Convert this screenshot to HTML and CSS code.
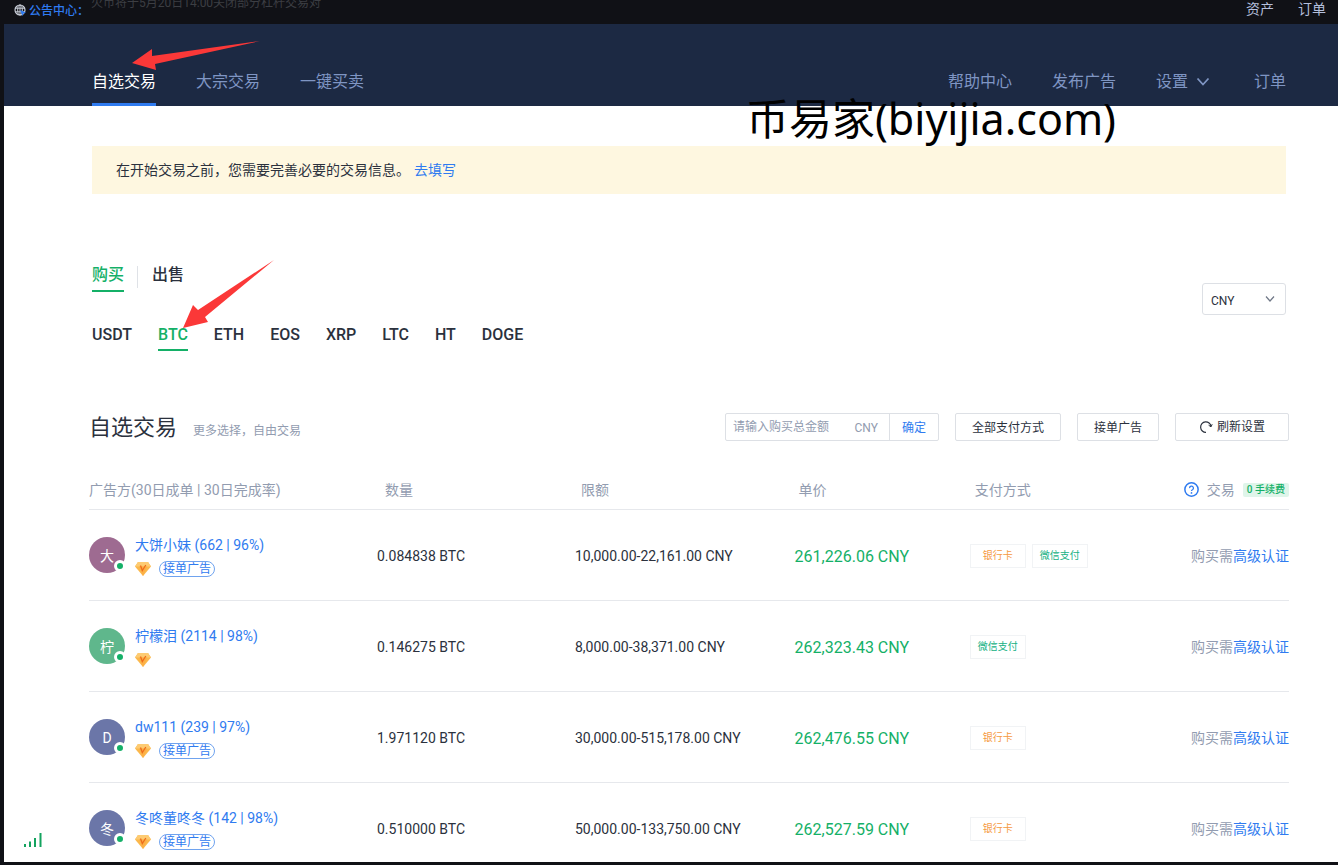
FILE: index.html
```html
<!DOCTYPE html>
<html lang="zh-CN">
<head>
<meta charset="utf-8">
<title>自选交易</title>
<link rel="stylesheet" href="styles.css">
</head>
<body>
<svg class="defs" aria-hidden="true">
  <symbol id="gem" viewBox="0 0 16 14">
    <path d="M3 0h10l3 4.500L8 14 0 4.500z" fill="#fbb84c"/>
    <path d="M3 0h10l3 4.500H0z" fill="#fdcb72"/>
    <path d="M4 4.500h8L8 14z" fill="#fcaf45"/>
    <path d="M5.500 3.500L7.300 8.500 10.800 3" fill="none" stroke="#ee6c1c" stroke-width="1.300"/>
  </symbol>
</svg>
<div class="page">
  <div class="topbar">
    <svg class="globe" viewBox="0 0 12 12"><circle cx="6" cy="6" r="5" fill="none" stroke="#c9ced8" stroke-width="1.200"/><ellipse cx="6" cy="6" rx="2.300" ry="5" fill="none" stroke="#c9ced8"/><path d="M1 4.200h10M1 7.800h10M6 1v10" stroke="#c9ced8" fill="none"/><path d="M6 6l6 2.500-2.500 1L8.500 12z" fill="#2f7bf0"/></svg>
    <span class="topbar-label">公告中心：</span>
    <span class="topbar-news">火币将于5月20日14:00关闭部分杠杆交易对</span>
    <nav class="topbar-links"><a href="#">资产</a><a href="#">订单</a></nav>
  </div>
  <header class="header">
    <nav class="nav">
      <a class="active" href="#">自选交易</a>
      <a href="#">大宗交易</a>
      <a href="#">一键买卖</a>
    </nav>
    <nav class="nav">
      <a href="#">帮助中心</a>
      <a href="#">发布广告</a>
      <a href="#">设置<svg class="caret" viewBox="0 0 14 10"><path d="M1.500 1.500L7 7.500l5.500-6" fill="none" stroke="currentColor" stroke-width="1.800"/></svg></a>
      <a href="#">订单</a>
    </nav>
    <svg class="arrow arrow-nav" viewBox="0 0 128 30"><path d="M0 22L20 8v7L128 0 23 23l1 6z" fill="#fb3838"/></svg>
    <div class="watermark">币易家(biyijia.com)</div>
  </header>

  <section class="intro">
    <p class="notice">在开始交易之前，您需要完善必要的交易信息。<a href="#">去填写</a></p>
    <div class="market">
      <div>
        <div class="sides">
          <button class="side active">购买</button>
          <button class="side">出售</button>
        </div>
        <div class="coins">
          <button class="coin">USDT</button>
          <button class="coin active">BTC<svg class="arrow arrow-coin" viewBox="0 0 92 68"><path d="M0 68L10 45l5 5L91 0 22 57l3 5z" fill="#fb3838"/></svg></button>
          <button class="coin">ETH</button>
          <button class="coin">EOS</button>
          <button class="coin">XRP</button>
          <button class="coin">LTC</button>
          <button class="coin">HT</button>
          <button class="coin">DOGE</button>
        </div>
      </div>
      <div class="currency">
        <select aria-label="法币"><option>CNY</option></select>
        <svg viewBox="0 0 10 8"><path d="M1 1.500l4 4.500 4-4.500" fill="none" stroke="#707887" stroke-width="1.200"/></svg>
      </div>
    </div>
  </section>

  <main class="list">
    <div class="list-head">
      <h1>自选交易</h1>
      <span class="sub">更多选择，自由交易</span>
      <div class="filters">
        <div class="amount">
          <input type="text" aria-label="购买总金额" placeholder="请输入购买总金额">
          <span>CNY</span>
          <button>确定</button>
        </div>
        <button class="filter">全部支付方式</button>
        <button class="filter">接单广告</button>
        <button class="filter refresh"><svg viewBox="0 0 14 14"><path d="M7 12.300A5.200 5.200 0 1 1 12 6.500" fill="none" stroke="#2b313d" stroke-width="1.200"/><path d="M9.600 5.200l2.400 1.600 1.200-2.600" fill="none" stroke="#2b313d"/></svg>刷新设置</button>
      </div>
    </div>
    <table class="ads">
      <thead>
        <tr>
          <th class="c-user">广告方(30日成单 | 30日完成率)</th>
          <th class="c-qty">数量</th>
          <th class="c-limit">限额</th>
          <th class="c-price">单价</th>
          <th class="c-pay">支付方式</th>
          <th class="c-trade"><div class="trade-head"><svg viewBox="0 0 14 14"><circle cx="7" cy="7" r="6.200" fill="none" stroke="#2f7bf0" stroke-width="1.400"/><path d="M5.200 5.700a1.800 1.800 0 1 1 2.700 1.500c-.6.300-.9.600-.9 1.200" fill="none" stroke="#2f7bf0" stroke-width="1.200"/><circle cx="7" cy="10.200" r=".8" fill="#2f7bf0"/></svg><span>交易</span><span class="fee">0 手续费</span></div></th>
        </tr>
      </thead>
      <tbody>
        <tr>
          <td><div class="user"><span class="avatar plum">大</span><div><a href="#">大饼小妹 (662 | 96%)</a><div class="marks"><svg><use href="#gem"/></svg><span class="tag">接单广告</span></div></div></div></td>
          <td>0.084838 BTC</td><td>10,000.00-22,161.00 CNY</td><td class="price">261,226.06 CNY</td>
          <td><div class="pays"><span class="pay bank">银行卡</span><span class="pay wechat">微信支付</span></div></td>
          <td class="trade">购买需<a href="#">高级认证</a></td>
        </tr>
        <tr>
          <td><div class="user"><span class="avatar green">柠</span><div><a href="#">柠檬泪 (2114 | 98%)</a><div class="marks"><svg><use href="#gem"/></svg></div></div></div></td>
          <td>0.146275 BTC</td><td>8,000.00-38,371.00 CNY</td><td class="price">262,323.43 CNY</td>
          <td><div class="pays"><span class="pay wechat">微信支付</span></div></td>
          <td class="trade">购买需<a href="#">高级认证</a></td>
        </tr>
        <tr>
          <td><div class="user"><span class="avatar slate">D</span><div><a href="#">dw111 (239 | 97%)</a><div class="marks"><svg><use href="#gem"/></svg><span class="tag">接单广告</span></div></div></div></td>
          <td>1.971120 BTC</td><td>30,000.00-515,178.00 CNY</td><td class="price">262,476.55 CNY</td>
          <td><div class="pays"><span class="pay bank">银行卡</span></div></td>
          <td class="trade">购买需<a href="#">高级认证</a></td>
        </tr>
        <tr>
          <td><div class="user"><span class="avatar slate">冬</span><div><a href="#">冬咚董咚冬 (142 | 98%)</a><div class="marks"><svg><use href="#gem"/></svg><span class="tag">接单广告</span></div></div></div></td>
          <td>0.510000 BTC</td><td>50,000.00-133,750.00 CNY</td><td class="price">262,527.59 CNY</td>
          <td><div class="pays"><span class="pay bank">银行卡</span></div></td>
          <td class="trade">购买需<a href="#">高级认证</a></td>
        </tr>
      </tbody>
    </table>
  </main>
  <svg class="signal" viewBox="0 0 18 14"><path d="M1 11v3M6 8.500V14M11 5v9M16.500 0v14" stroke="#14a35f" stroke-width="2" fill="none"/></svg>
</div>
</body>
</html>
```

FILE: styles.css
```css
* { box-sizing: border-box; }
body {
  margin: 0;
  font-family: Roboto, "Noto Sans CJK SC", sans-serif;
  font-size: 14px;
  line-height: 20px;
  color: #2b313d;
}
a { color: #2f7bf0; text-decoration: none; }
button, input, select { font: inherit; color: inherit; background: none; border: 0; padding: 0; margin: 0; }
button { cursor: pointer; }
.defs { display: none; }
.page {
  position: relative;
  height: 100vh;
  overflow: hidden;
  background: #fff;
  border-left: 4px solid #101116;
  border-bottom: 3px solid #101116;
}

/* Announcement bar */
.topbar {
  display: flex;
  height: 24px;
  padding: 0 12px 0 10px;
  background: #101116;
  font-size: 12px;
}
.globe { width: 12px; height: 12px; margin: 4px 3px 0 0; flex: none; }
.topbar-label { width: 62px; color: #2f7bf0; font-weight: 500; line-height: 22px; white-space: nowrap; }
.topbar-news { color: #3c3e43; line-height: 6px; white-space: nowrap; }
.topbar-links { display: flex; gap: 24px; margin-left: auto; font-size: 14px; line-height: 18px; }
.topbar-links a { color: #b4bfdc; }

/* Header */
.header {
  position: relative;
  display: flex;
  justify-content: space-between;
  height: 82px;
  padding: 0 52px 0 88px;
  background: #1c2943;
}
.nav { display: flex; gap: 40px; font-size: 16px; }
.nav a {
  display: flex;
  align-items: center;
  color: #7f95c3;
  padding-top: 36px;
  border-bottom: 3px solid transparent;
}
.nav .active { color: #fff; border-color: #2f7bf0; }
.caret { width: 14px; height: 10px; margin: 0 4px 0 8px; }
.arrow { position: absolute; overflow: visible; }
.arrow-nav { left: 128px; top: 17px; width: 128px; height: 30px; }
.watermark {
  position: absolute;
  right: 222px;
  top: 65px;
  font: 43px/60px "Noto Sans", "Noto Sans CJK SC", sans-serif;
  color: #000;
  white-space: nowrap;
}

/* Notice, sides and coins */
.intro { padding: 40px 52px 0 88px; }
.notice { margin: 0; padding: 14px 24px; background: #fef7e0; }
.notice a { margin-left: 4px; }
.market { display: flex; justify-content: space-between; padding-top: 68px; }
.sides { display: flex; font-size: 16px; font-weight: 500; }
.side { height: 30px; padding-bottom: 2px; line-height: 24px; border-bottom: 2px solid transparent; }
.side.active, .coin.active { color: #14b067; border-color: #14b067; }
.side + .side { position: relative; margin-left: 28px; }
.side + .side::before {
  content: "";
  position: absolute;
  left: -15px;
  top: 4px;
  height: 22px;
  border-left: 1px solid #dfe2e7;
}
.coins { display: flex; gap: 26px; padding-top: 31px; font-size: 16px; font-weight: 500; }
.coin { position: relative; height: 28px; padding-bottom: 2px; line-height: 22px; border-bottom: 2px solid transparent; }
.arrow-coin { left: 25px; top: -63px; width: 92px; height: 68px; pointer-events: none; }
.currency { position: relative; height: 32px; width: 84px; margin-top: 21px; }
.currency select {
  appearance: none;
  width: 100%;
  height: 32px;
  padding: 3px 8px 0;
  border: 1px solid #dde0e5;
  border-radius: 3px;
  font-size: 12px;
}
.currency svg { position: absolute; right: 11px; top: 12px; width: 10px; height: 8px; pointer-events: none; }

/* Advert list */
.list { padding: 56px 49px 0 85px; }
.list-head { display: flex; height: 40px; }
.list-head h1 { margin: 0 16px 0 0; font-size: 22px; line-height: 42px; font-weight: 400; }
.sub { font-size: 12px; line-height: 48px; color: #929cb0; }
.filters { display: flex; gap: 16px; margin: 6px 0 0 auto; font-size: 12px; }
.amount { display: flex; width: 214px; height: 28px; border: 1px solid #dde0e5; border-radius: 2px; }
.amount input { flex: 1; min-width: 0; padding-left: 7px; }
.amount input::placeholder { color: #929cb0; }
.amount span { padding: 0 11px; line-height: 28px; color: #929cb0; }
.amount button { width: 49px; padding-top: 2px; border-left: 1px solid #dde0e5; color: #2f7bf0; }
.filter { height: 28px; padding: 2px 16px 0; border: 1px solid #dde0e5; border-radius: 2px; }
.refresh { display: flex; align-items: center; justify-content: center; gap: 4px; width: 114px; padding-top: 0; }
.refresh svg { width: 14px; height: 14px; }
.ads { width: 100%; border-collapse: collapse; table-layout: fixed; }
.ads th { height: 62px; padding: 24px 0 0; text-align: left; font-weight: 400; color: #929cb0; border-bottom: 1px solid #e6e8ec; }
.ads td { height: 91px; padding: 2px 0 0; border-bottom: 1px solid #e6e8ec; white-space: nowrap; }
.c-user { width: 24%; }
.ads .c-qty { width: 16.5%; padding-left: 8px; }
.ads .c-limit { width: 18.3%; padding-left: 6px; }
.ads .c-price { width: 14.6%; padding-left: 4px; }
.ads .c-pay { padding-left: 5px; width: 15%; }
.trade-head { display: flex; align-items: center; justify-content: flex-end; gap: 8px; }
.trade-head svg { width: 15px; height: 15px; }
.fee { padding: 0 4px; background: #dff5ea; color: #14b067; font-size: 10px; line-height: 14px; font-weight: 500; border-radius: 2px; }
.user { display: flex; gap: 10px; }
.avatar {
  position: relative;
  width: 36px;
  height: 36px;
  margin-top: 2px;
  border-radius: 50%;
  color: #fff;
  line-height: 39px;
  text-align: center;
}
.avatar::after {
  content: "";
  position: absolute;
  right: -1px;
  bottom: 1px;
  width: 6px;
  height: 6px;
  border: 3px solid #fff;
  border-radius: 50%;
  background: #14b067;
}
.plum { background: #9e6b91; }
.green { background: #5fb78c; }
.slate { background: #6b76a8; }
.marks { display: flex; align-items: center; gap: 8px; height: 16px; margin-top: 6px; }
.marks svg { width: 16px; height: 14px; }
.tag { padding: 0 3px; border: 1px solid #6fa3ef; border-radius: 8px; color: #2f7bf0; font-size: 12px; line-height: 14px; }
.ads .price { padding-top: 4px; color: #14b067; font-size: 16px; }
.pays { display: flex; gap: 6px; }
.pay { width: 56px; border: 1px solid #f1f3f5; font-size: 10px; line-height: 22px; text-align: center; }
.bank { color: #f59a42; }
.wechat { color: #14b183; }
.ads .trade { text-align: right; color: #929cb0; }
.signal { position: absolute; left: 20px; bottom: 15px; width: 18px; height: 14px; }
```
